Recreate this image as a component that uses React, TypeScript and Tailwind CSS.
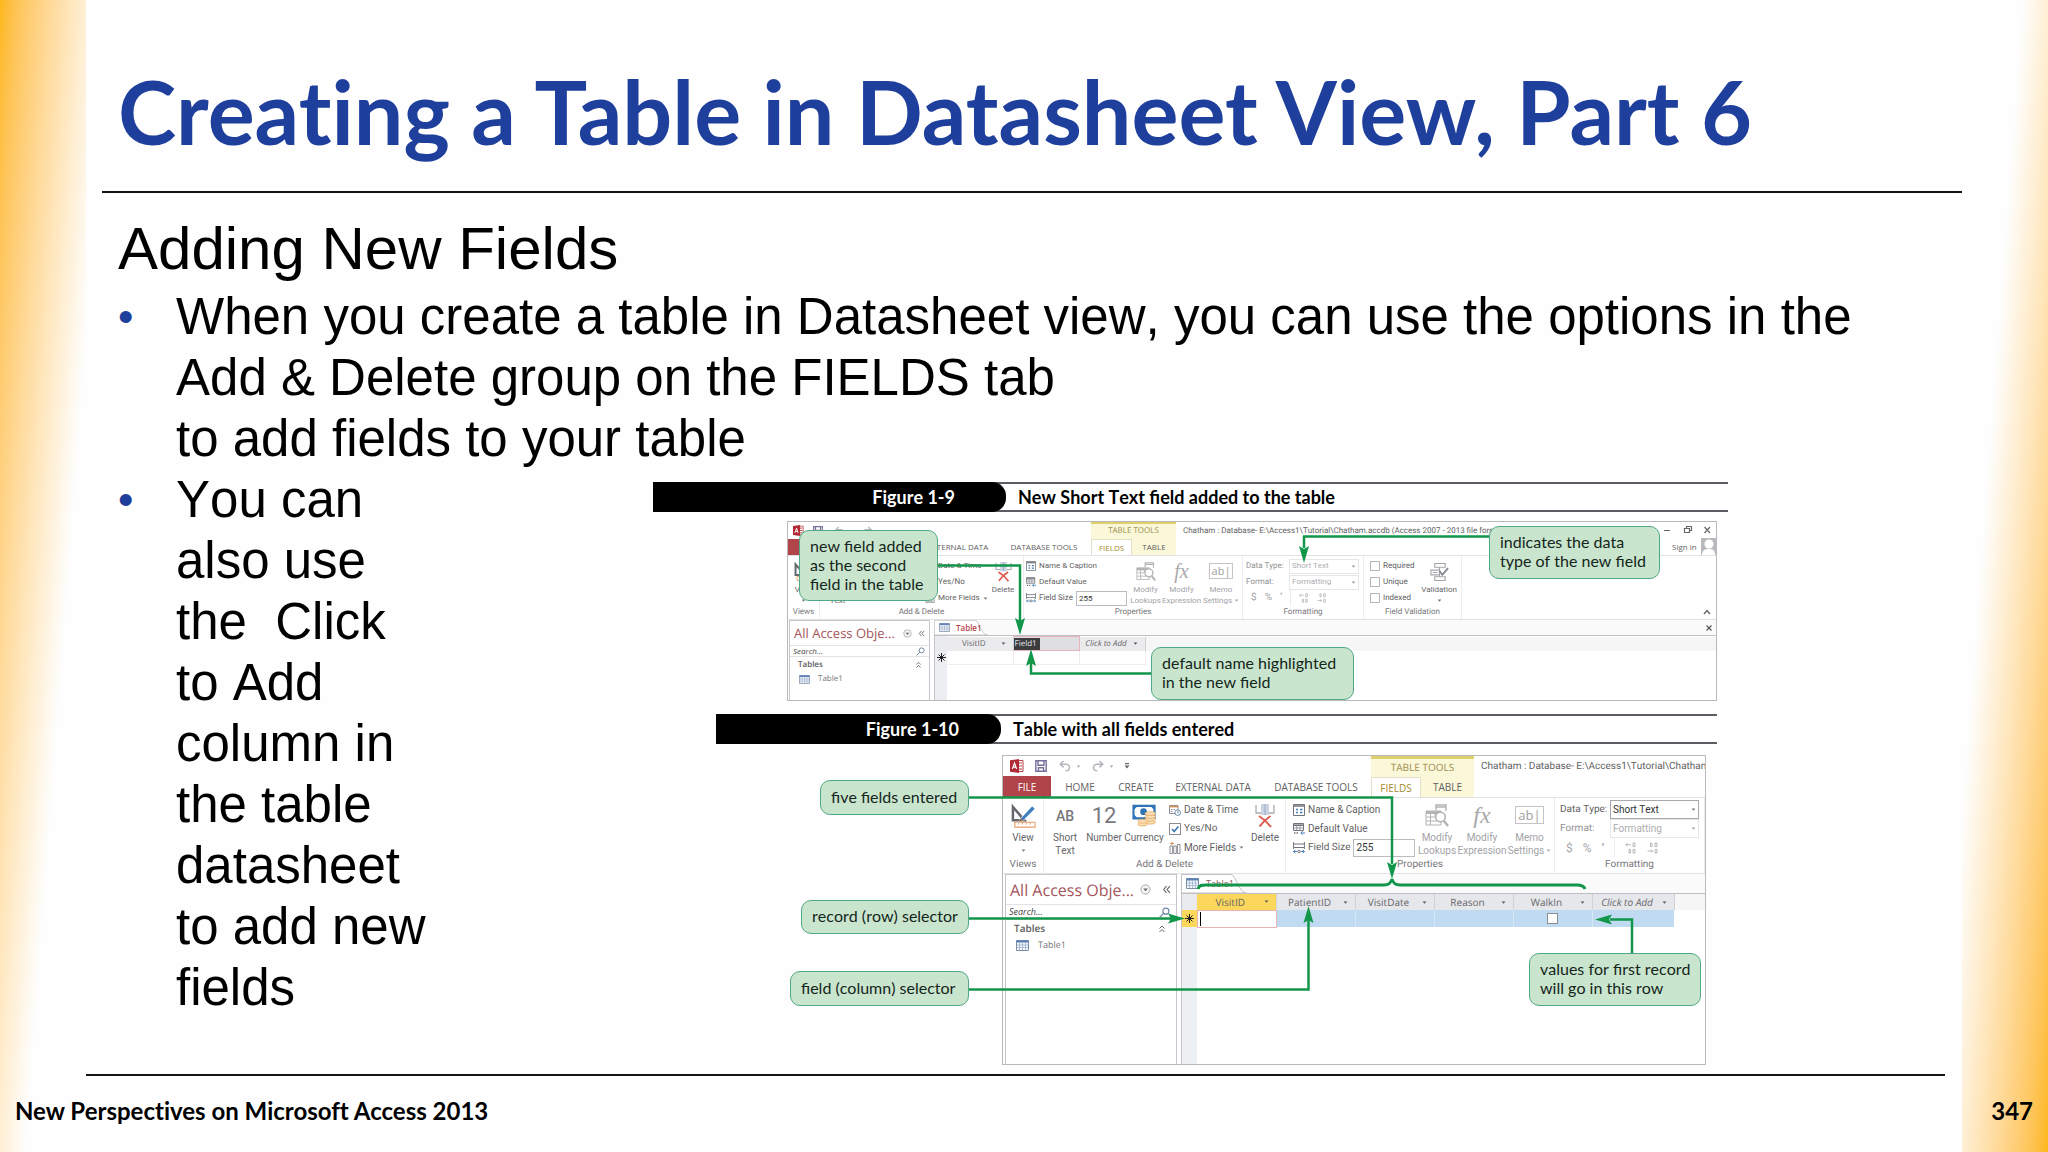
import React from "react";

type Size = "lg" | "sm";

/* ---------- icons ---------- */

const AccessLogo = ({ className }: { className: string }) => (
  <svg viewBox="0 0 14 14" className={className} aria-hidden="true">
    <path d="M8 1.5h5v11H8z" fill="#fff" stroke="#b8434a" strokeWidth="1" />
    <path d="M9 4h3M9 7h3M9 10h3" stroke="#b8434a" strokeWidth="1.2" />
    <path d="M0 1.2 9 0v14L0 12.8z" fill="#b02a35" />
    <path d="M2.4 10 4.5 4l2.1 6M3.1 8.2h2.8" fill="none" stroke="#fff" strokeWidth="1.2" />
  </svg>
);

const SaveIcon = ({ className }: { className: string }) => (
  <svg viewBox="0 0 12 12" className={className} fill="none" stroke="#77709c" strokeWidth="1.4" aria-hidden="true">
    <path d="M.8.8h10.4v10.4H.8z" />
    <path d="M3 1v4.2h6V1M3.4 11V7.8h5.2V11" />
  </svg>
);

const UndoIcon = ({ className, flip = false }: { className: string; flip?: boolean }) => (
  <svg viewBox="0 0 12 12" className={className} fill="none" stroke="#b3b5bb" strokeWidth="1.5" aria-hidden="true">
    <g transform={flip ? "matrix(-1 0 0 1 12 0)" : undefined}>
      <path d="M4.6 1 1.2 4.2l3.4 3.2M1.4 4.2h5.4c5 0 5 6.4-.2 6.6" />
    </g>
  </svg>
);

const Caret = ({ color = "#777" }: { color?: string }) => (
  <svg viewBox="0 0 6 4" className="h-[3px] w-[5px] shrink-0" aria-hidden="true">
    <path d="M.5.5h5L3 3.5z" fill={color} />
  </svg>
);

const ViewIcon = ({ className }: { className: string }) => (
  <svg viewBox="0 0 26 26" className={className} aria-hidden="true">
    <path d="M2 3v14h12z" fill="none" stroke="#66686e" strokeWidth="2.6" />
    <path d="M4 19h21v5H4z" fill="#fff" stroke="#e8a06c" strokeWidth="1.2" />
    <path d="M8 19v2.4M12 19v2.4M16 19v2.4M20 19v2.4" stroke="#e8a06c" />
    <path d="M10 15 22 2l3 3-12 12-5 2z" fill="#3f7fbf" stroke="#fff" strokeWidth=".7" />
    <path d="m10 15 3 2-5 2z" fill="#9a6a42" />
  </svg>
);

const CurrencyIcon = ({ className }: { className: string }) => (
  <svg viewBox="0 0 26 24" className={className} aria-hidden="true">
    <path d="M1.5 2h22v13h-22z" fill="#fff" stroke="#2f74b5" strokeWidth="2.2" />
    <circle cx="12" cy="8" r="3.5" fill="#2f74b5" />
    <path d="M2 2h4L2 6zM23 2h-4l4 4zM2 15v-4l4 4z" fill="#2f74b5" />
    <g fill="#f8dfb8" stroke="#e9a95c" strokeWidth=".8">
      <ellipse cx="19" cy="19" rx="5.5" ry="2" />
      <ellipse cx="19" cy="16" rx="5.5" ry="2" />
      <ellipse cx="19" cy="13" rx="5.5" ry="2" />
      <ellipse cx="19" cy="10" rx="5.5" ry="2" />
      <ellipse cx="11" cy="21" rx="5" ry="2" />
      <ellipse cx="11" cy="18" rx="5" ry="2" />
    </g>
  </svg>
);

const DateIcon = ({ className }: { className: string }) => (
  <svg viewBox="0 0 12 12" className={className} fill="none" stroke="#8a8d93" aria-hidden="true">
    <path d="M.5 1.5H9v8H.5z" />
    <path d="M.5 2.6H9" stroke="#d9935a" strokeWidth="1.6" />
    <path d="M2 5.5h1.5M4.5 5.5H6M2 7.5h1.5" />
    <circle cx="8.7" cy="8.7" r="2.8" fill="#fff" stroke="#6f8fae" />
    <path d="M8.7 7v1.9h1.4" stroke="#6f8fae" strokeWidth=".8" />
  </svg>
);

const MoreIcon = ({ className }: { className: string }) => (
  <svg viewBox="0 0 12 12" className={className} fill="none" stroke="#8a8d93" aria-hidden="true">
    <path d="M1 4h2.6v7.5H1zM4.7 4h2.6v7.5H4.7zM8.4 2.5H11v9H8.4z" />
    <path d="M1 1.5h4M3 0v3" stroke="#d9935a" />
  </svg>
);

const DeleteIcon = ({ className }: { className: string }) => (
  <svg viewBox="0 0 20 24" className={className} fill="none" aria-hidden="true">
    <path d="M1 1v8h5M19 1v8h-5" stroke="#a9acb2" strokeWidth="1.3" />
    <path d="M6 0h8v11H6z" fill="#c9d3e4" />
    <path d="M10 0v11" stroke="#9eabc4" />
    <path d="M4 12c5 3 9 7 12 11M15.5 12C11 15 7 19 4.5 22.5" stroke="#dd5a4d" strokeWidth="2" />
  </svg>
);

const NameIcon = ({ className }: { className: string }) => (
  <svg viewBox="0 0 12 12" className={className} fill="none" stroke="#70757d" aria-hidden="true">
    <path d="M.5.5h11v11H.5z" />
    <path d="M.5 2h11" strokeWidth="1.5" />
    <path d="M3 5.5h2M7 5.5h2.5M3 8.5h2M7 8.5h2.5" stroke="#4a7fb8" strokeWidth="1.4" />
  </svg>
);

const DefaultIcon = ({ className }: { className: string }) => (
  <svg viewBox="0 0 12 12" className={className} fill="none" stroke="#70757d" aria-hidden="true">
    <path d="M.5.5h10v7H.5z" />
    <path d="M.5 2.2h10" strokeWidth="1.6" />
    <path d="M1 5h9M3.8 3v4M7 3v4" strokeWidth=".7" />
    <path d="M1 10h5" strokeWidth="1.5" strokeDasharray="1.5 1" />
    <path d="M12 10H8M9.6 8.2 7.8 10l1.8 1.8" stroke="#4a7fb8" />
  </svg>
);

const SizeIcon = ({ className }: { className: string }) => (
  <svg viewBox="0 0 12 12" className={className} fill="none" stroke="#70757d" aria-hidden="true">
    <path d="M.6 0v7M11.4 0v7M1 2h10M1 5.5h10" />
    <path d="M.5 9.5h4M7.5 9.5h4M2.3 7.8.6 9.5l1.7 1.7M9.7 7.8l1.7 1.7-1.7 1.7" stroke="#4a7fb8" />
    <circle cx="6" cy="9.5" r="1.2" />
  </svg>
);

const LookupIcon = ({ className }: { className: string }) => (
  <svg viewBox="0 0 24 24" className={className} fill="none" stroke="#b4b4b6" aria-hidden="true">
    <path d="M11 6V1h10v6M11 3h10" strokeWidth="1.4" />
    <path d="M1 7h15v14H1z" />
    <path d="M1 8.5h15" strokeWidth="3" />
    <path d="M1 13h9M1 17h11M5.5 9v12M10 9v4" />
    <circle cx="15.5" cy="13" r="4.8" fill="#fff" strokeWidth="1.6" />
    <path d="m19 17 4 5" strokeWidth="2.4" />
  </svg>
);

const FxIcon = ({ size }: { size: Size }) => (
  <span
    className={
      size === "lg"
        ? "font-['Liberation_Serif',serif] text-[24px] leading-[22px] italic text-[#a9a9ab]"
        : "font-['Liberation_Serif',serif] text-[20px] leading-[18px] italic text-[#a9a9ab]"
    }
  >
    fx
  </span>
);

const MemoIcon = ({ size }: { size: Size }) => (
  <span
    className={
      size === "lg"
        ? "mt-[2px] border border-[#c4c4c6] px-[2px] font-['Open_Sans',sans-serif] text-[13px] leading-[16px] text-[#a0a0a2]"
        : "mt-px border border-[#c4c4c6] px-[2px] font-['Open_Sans',sans-serif] text-[11px] leading-[14px] text-[#a0a0a2]"
    }
  >
    ab|
  </span>
);

const ValidationIcon = ({ className }: { className: string }) => (
  <svg viewBox="0 0 20 20" className={className} fill="none" stroke="#a4a6aa" strokeWidth="1.2" aria-hidden="true">
    <path d="M5 1h11v4H5zM5 15h11v4H5zM1 8h9v5H1z" />
    <path d="M10 5v3M10 13v2M3 10.5h5" />
    <path d="m10 9 3 4 6-7" stroke="#868a90" strokeWidth="2" />
  </svg>
);

const DecimalIcon = ({ className, flip = false }: { className: string; flip?: boolean }) => (
  <svg viewBox="0 0 12 12" className={className} fill="none" stroke="#b9b9bb" aria-hidden="true">
    {flip ? (
      <path d="M3.5 1H5v3.5H3.5zM8 1h2v3.5H8zM8 7.5h2V11H8zM.5 9h5M4 7.5 5.5 9 4 10.5" />
    ) : (
      <path d="M8 1h2v3.5H8zM.8 2.7h5M2.4 1.2.8 2.7l1.6 1.5M4 7.5h1.5V11H4zM8 7.5h2V11H8z" />
    )}
  </svg>
);

const GridIcon = ({ className }: { className: string }) => (
  <svg viewBox="0 0 13 11" className={className} aria-hidden="true">
    <path d="M.5.5h12v10H.5z" fill="#f4f8fd" stroke="#7d8da6" />
    <path d="M.5 1.5h12" stroke="#5b7fb5" strokeWidth="2" />
    <path d="M3.5 2v8M6.5 2v8M9.5 2v8M1 5h11M1 7.5h11" stroke="#9db1cf" strokeWidth=".8" />
  </svg>
);

const SearchIcon = ({ className }: { className: string }) => (
  <svg viewBox="0 0 12 12" className={className} fill="none" stroke="#6f87a0" strokeWidth="1.3" aria-hidden="true">
    <circle cx="7.5" cy="4.5" r="3.3" />
    <path d="M5 7 .8 11.2" />
  </svg>
);

const DropCircle = ({ className }: { className: string }) => (
  <svg viewBox="0 0 12 12" className={className} aria-hidden="true">
    <circle cx="6" cy="6" r="5" fill="#f5f5f5" stroke="#a3a3a8" />
    <path d="M3.5 5h5L6 8z" fill="#66666c" />
  </svg>
);

const Chevrons = ({ className, up = false }: { className: string; up?: boolean }) => (
  <svg viewBox="0 0 8 8" className={className} fill="none" stroke="#66666c" aria-hidden="true">
    <path d={up ? "M1.5 4 4 1.5 6.5 4M1.5 7.5 4 5l2.5 2.5" : "M4 1 1.5 4 4 7M7 1 4.5 4 7 7"} />
  </svg>
);

const Star = () => (
  <svg viewBox="0 0 9 9" className="mx-auto h-[9px] w-[9px]" stroke="#222" aria-hidden="true">
    <path d="M4.5 0v9M0 4.5h9" />
    <path d="m1.5 1.5 6 6M7.5 1.5l-6 6" />
  </svg>
);

/* ---------- ribbon building blocks ---------- */

const Group = ({
  label,
  size,
  className,
  children,
}: {
  label: string;
  size: Size;
  className: string;
  children?: React.ReactNode;
}) => (
  <section className={`flex shrink-0 flex-col border-r border-[#ededf0] ${className}`}>
    <div className="flex min-h-0 flex-1">{children}</div>
    <div
      className={
        size === "lg"
          ? "h-4 text-center text-[10px] leading-[16px] text-[#77777b]"
          : "h-[14px] text-center text-[8px] leading-[14px] text-[#77777b]"
      }
    >
      {label}
    </div>
  </section>
);

const BigButton = ({
  icon,
  lines,
  size,
  className,
  muted = false,
  caret = false,
}: {
  icon: React.ReactNode;
  lines: string[];
  size: Size;
  className: string;
  muted?: boolean;
  caret?: boolean;
}) => (
  <button
    type="button"
    className={`flex shrink-0 flex-col items-center justify-start whitespace-nowrap pt-[6px] ${
      size === "lg" ? "text-[10px] leading-[13px]" : "text-[8px] leading-[11px]"
    } ${muted ? "text-[#a3a3a6]" : "text-[#66666a]"} ${className}`}
  >
    <span className={size === "lg" ? "flex h-[27px] shrink-0 items-start" : "flex h-[22px] shrink-0 items-start"}>{icon}</span>
    {lines.map((line, i) => (
      <span key={line} className="flex items-center gap-[2px]">
        {line}
        {caret && lines.length > 1 && i === lines.length - 1 && <Caret color="#aaa" />}
      </span>
    ))}
    {caret && lines.length === 1 && (
      <span className={size === "lg" ? "flex h-[13px] items-center" : "flex h-[11px] items-center"}>
        <Caret />
      </span>
    )}
  </button>
);

const rowText = (size: Size) =>
  size === "lg"
    ? "flex h-[19px] items-center gap-[3px] whitespace-nowrap text-[10px] text-[#5f5f63]"
    : "flex h-4 items-center gap-[3px] whitespace-nowrap text-[8px] text-[#5f5f63]";

const rowIcon = (size: Size) => (size === "lg" ? "h-[12px] w-[12px] shrink-0" : "h-[10px] w-[10px] shrink-0");

const DateFields = ({ size, className }: { size: Size; className: string }) => (
  <div className={`shrink-0 pl-[3px] pt-[2px] ${className}`}>
    <button type="button" className={rowText(size)}>
      <DateIcon className={rowIcon(size)} />
      Date &amp; Time
    </button>
    <label className={rowText(size)}>
      <span className="relative flex">
        <input type="checkbox" defaultChecked className={`appearance-none border border-[#8b8d92] bg-white ${rowIcon(size)}`} />
        <svg
          viewBox="0 0 12 12"
          className={`pointer-events-none absolute inset-0 ${rowIcon(size)}`}
          fill="none"
          stroke="#3d78b4"
          strokeWidth="1.6"
          aria-hidden="true"
        >
          <path d="m3 6 2.2 2.5L9.3 3.5" />
        </svg>
      </span>
      Yes/No
    </label>
    <button type="button" className={rowText(size)}>
      <MoreIcon className={rowIcon(size)} />
      More Fields
      <Caret />
    </button>
  </div>
);

const NameFields = ({ size, className, inputClass }: { size: Size; className: string; inputClass: string }) => (
  <div className={`shrink-0 pt-[2px] ${className}`}>
    <button type="button" className={rowText(size)}>
      <NameIcon className={rowIcon(size)} />
      Name &amp; Caption
    </button>
    <button type="button" className={rowText(size)}>
      <DefaultIcon className={rowIcon(size)} />
      Default Value
    </button>
    <label className={rowText(size)}>
      <SizeIcon className={rowIcon(size)} />
      Field Size
      <input
        defaultValue="255"
        className={`ml-auto min-w-0 border border-[#bcbcc0] bg-white px-[2px] text-[#333] ${inputClass}`}
      />
    </label>
  </div>
);

const PickRow = ({ label, value, size, muted }: { label: string; value: string; size: Size; muted: boolean }) => (
  <label className={`${rowText(size)} ${muted ? "opacity-70" : ""}`}>
    <span className={size === "lg" ? "w-[47px]" : "w-[40px]"}>{label}</span>
    <span className="relative flex items-center">
      <select
        disabled={muted}
        className={`appearance-none border bg-white pl-[2px] opacity-100 ${
          size === "lg" ? "h-[19px] w-[89px] text-[10px]" : "h-[15px] w-[70px] text-[8px]"
        } ${muted ? "border-[#dcdcdf] text-[#8a8a8d]" : "border-[#a9a9ad] text-[#333]"}`}
      >
        <option>{value}</option>
      </select>
      <span className="pointer-events-none absolute right-[3px]">
        <Caret />
      </span>
    </span>
  </label>
);

const Formatting = ({ size, className, muted }: { size: Size; className: string; muted: boolean }) => (
  <Group label="Formatting" size={size} className={className}>
    <div className={size === "lg" ? "pl-[5px] pt-[2px]" : "pl-[3px] pt-[2px]"}>
      <PickRow label="Data Type:" value="Short Text" size={size} muted={muted} />
      <PickRow label="Format:" value="Formatting" size={size} muted />
      <div
        className={
          size === "lg"
            ? "flex h-[19px] items-center gap-[10px] pl-[6px] text-[12px] text-[#a6a6a9]"
            : "flex h-4 items-center gap-[8px] pl-[5px] text-[10px] text-[#a6a6a9]"
        }
      >
        <span>$</span>
        <span>%</span>
        <span className="font-bold">’</span>
        <span className="h-full border-l border-[#ededf0]" />
        <DecimalIcon className={rowIcon(size)} />
        <DecimalIcon flip className={rowIcon(size)} />
      </div>
    </div>
  </Group>
);

const PropertyTools = ({ size, widths }: { size: Size; widths: [string, string, string] }) => (
  <>
    <BigButton
      muted
      size={size}
      className={widths[0]}
      icon={<LookupIcon className={size === "lg" ? "h-[24px] w-[24px]" : "h-[20px] w-[20px]"} />}
      lines={["Modify", "Lookups"]}
    />
    <BigButton muted size={size} className={widths[1]} icon={<FxIcon size={size} />} lines={["Modify", "Expression"]} />
    <BigButton muted caret size={size} className={widths[2]} icon={<MemoIcon size={size} />} lines={["Memo", "Settings"]} />
  </>
);

/* ---------- navigation pane and tabs ---------- */

const NavPane = ({ size, className }: { size: Size; className: string }) => {
  const lg = size === "lg";
  return (
    <aside className={`shrink-0 border-x border-t border-[#c6c6ca] bg-white ${className}`}>
      <div className={lg ? "flex h-[29px] items-center pl-1 pr-[5px]" : "flex h-[24px] items-center pl-1 pr-[4px]"}>
        <h3
          className={
            lg
              ? "flex-1 whitespace-nowrap text-[16px] leading-[20px] text-[#a4555b]"
              : "flex-1 whitespace-nowrap text-[13px] leading-[18px] text-[#a4555b]"
          }
        >
          All Access Obje...
        </h3>
        <DropCircle className={lg ? "mr-[11px] h-[11px] w-[11px]" : "mr-[6px] h-[9px] w-[9px]"} />
        <Chevrons className={lg ? "h-[9px] w-[9px]" : "h-[7px] w-[7px]"} />
      </div>
      <div
        className={
          lg
            ? "flex h-[16px] items-center border-y border-[#e3e3e6] pr-[6px]"
            : "flex h-[12px] items-center border-y border-[#e3e3e6] pr-[4px]"
        }
      >
        <input
          aria-label="Search"
          placeholder="Search..."
          className={
            lg
              ? "w-0 flex-1 pl-[3px] text-[9px] leading-[12px] italic placeholder:text-[#444]"
              : "w-0 flex-1 pl-[3px] text-[8px] leading-[10px] italic placeholder:text-[#444]"
          }
        />
        <SearchIcon className={lg ? "h-[11px] w-[11px]" : "h-[9px] w-[9px]"} />
      </div>
      <div
        className={
          lg
            ? "flex h-[16px] items-center justify-between pl-2 pr-[10px] text-[10px] font-semibold text-[#5b5b60]"
            : "flex h-[15px] items-center justify-between pl-2 pr-[7px] text-[8px] font-semibold text-[#5b5b60]"
        }
      >
        Tables
        <Chevrons up className={lg ? "h-[9px] w-[8px]" : "h-[7px] w-[7px]"} />
      </div>
      <div
        className={
          lg
            ? "flex h-[18px] items-center gap-[9px] pl-[10px] text-[9px] text-[#77777b]"
            : "flex h-[14px] items-center gap-[8px] pl-[9px] text-[8px] text-[#77777b]"
        }
      >
        <GridIcon className={lg ? "h-[11px] w-[13px]" : "h-[9px] w-[11px]"} />
        Table1
      </div>
    </aside>
  );
};

const SheetTab = ({ size, className }: { size: Size; className: string }) => {
  const lg = size === "lg";
  return (
    <button
      type="button"
      className={
        lg
          ? "relative flex h-full w-[66px] items-center gap-[7px] pl-[5px] text-[9px]"
          : "relative flex h-full w-[54px] items-center gap-[6px] pl-[5px] text-[8px]"
      }
    >
      <svg viewBox="0 0 66 20" preserveAspectRatio="none" className="absolute inset-0 h-full w-full" aria-hidden="true">
        <path d="M.5 20V.5H50c5 0 7 19 15.5 19.5z" fill="#fff" stroke="#c0c0c4" />
      </svg>
      <GridIcon className={lg ? "relative h-[11px] w-[13px]" : "relative h-[9px] w-[11px]"} />
      <span className={`relative ${className}`}>Table1</span>
    </button>
  );
};

const HeadCell = ({ children, className = "" }: { children?: React.ReactNode; className?: string }) => (
  <th scope="col" className={`border-r border-[#d2d2d6] p-0 font-normal ${className}`}>
    <span className="flex items-center justify-between pr-[7px]">
      <span className="flex-1 text-center whitespace-nowrap">{children}</span>
      <Caret color="#555" />
    </span>
  </th>
);

const ToolTabs = ({ size, className }: { size: Size; className: string }) => {
  const lg = size === "lg";
  return (
    <div className={`flex shrink-0 flex-col border-[#ddd06a] bg-[#fbf7d9] ${className}`}>
      <div className={lg ? "h-[18px] text-center leading-[16px] text-[#9c8f4d]" : "h-[15px] text-center leading-[13px] text-[#9c8f4d]"}>
        TABLE TOOLS
      </div>
      <div className="flex flex-1">
        <button
          type="button"
          className={
            lg
              ? "w-[50px] border-x border-t border-[#e3e0c8] bg-white text-[#a38a2c]"
              : "w-[41px] border-x border-t border-[#e3e0c8] bg-white text-[#a38a2c]"
          }
        >
          FIELDS
        </button>
        <button type="button" className="flex-1">
          TABLE
        </button>
      </div>
    </div>
  );
};

/* ---------- figure parts ---------- */

const Caption = ({ number, title, tagClass }: { number: string; title: string; tagClass: string }) => (
  <figcaption className="flex h-[30px] border-y-2 border-[#5c5c62] bg-white font-['Lato',sans-serif] text-[18px] leading-[26px] font-bold text-black">
    <span className={`-my-[2px] flex shrink-0 items-center justify-end rounded-r-[14px] bg-black text-white ${tagClass}`}>{number}</span>
    <span className="pl-3 whitespace-nowrap">{title}</span>
  </figcaption>
);

const Callout = ({ className, children }: { className: string; children: React.ReactNode }) => (
  <div
    className={`absolute flex items-center rounded-[10px] border border-[#4fa886] bg-[#cae5ce] pb-[3px] pl-[10px] font-['Lato',sans-serif] text-[16px] leading-[19px] whitespace-pre text-[#14251b] ${className}`}
  >
    {children}
  </div>
);

const Head = ({ x, y, turn }: { x: number; y: number; turn: number }) => (
  <path d="M0 0-5-17 0-14 5-17z" fill="#12964a" transform={`translate(${x} ${y}) rotate(${turn})`} />
);

function FigureNine() {
  return (
    <figure className="relative w-[1075px]">
      <Caption number="Figure 1-9" title="New Short Text field added to the table" tagClass="w-[353px] pr-[51px]" />
      <div className="mt-[9px] mr-[11px] ml-[134px] flex h-[180px] flex-col border border-[#b9b9bc] bg-white font-['Open_Sans',sans-serif] leading-[12px] text-[#5f5f63] [text-rendering:geometricPrecision]">
        <div className="flex h-[33px] shrink-0">
          <div className="flex w-[303px] shrink-0 flex-col">
            <div className="flex h-[17px] items-center pl-[5px]">
              <AccessLogo className="mr-[9px] h-[11px] w-[11px]" />
              <SaveIcon className="mr-[12px] h-[10px] w-[10px]" />
              <UndoIcon className="mr-[17px] h-[10px] w-[10px]" />
              <UndoIcon flip className="h-[10px] w-[10px]" />
            </div>
            <nav className="flex h-[16px] items-center text-[8px] whitespace-nowrap">
              <button type="button" aria-label="File" className="mr-[86px] h-full w-[40px] bg-[#b1444b]" />
              <button type="button" className="w-[88px]">EXTERNAL DATA</button>
              <button type="button" className="w-[84px]">DATABASE TOOLS</button>
            </nav>
          </div>
          <ToolTabs size="sm" className="w-[85px] border-t-2 text-[8px]" />
          <div className="flex min-w-0 flex-1">
            <div className="min-w-0 flex-1 overflow-hidden pl-[7px] font-['Roboto',sans-serif] text-[8px] leading-[17px] whitespace-nowrap">
              Chatham : Database- E:\Access1\Tutorial\Chatham.accdb (Access 2007 - 2013 file form
            </div>
            <div className="flex w-[54px] shrink-0 flex-col">
              <svg viewBox="0 0 54 16" className="h-[16px] w-[54px]" fill="none" stroke="#66666c" aria-hidden="true">
                <path d="M2 8.5h6M22.5 6.5h5v4h-5zM24.5 6V4.5h5v4H28M42.5 5l5.5 6M48 5l-5.5 6" strokeWidth="1.2" />
              </svg>
              <button type="button" className="flex h-[17px] items-center justify-between pl-[10px] text-[8px] whitespace-nowrap">
                Sign in
                <svg viewBox="0 0 15 17" className="h-[17px] w-[15px] bg-[#b9b9bd]" aria-hidden="true">
                  <circle cx="8" cy="6" r="4.5" fill="#fff" />
                  <path d="M1 17c0-5 3-6 7-6s6 1 6 6z" fill="#fff" />
                </svg>
              </button>
            </div>
          </div>
        </div>
        <div className="flex h-[65px] shrink-0 border-y border-[#e2e2e5] font-['Roboto',sans-serif]">
          <Group label="Views" size="sm" className="w-[32px]">
            <BigButton size="sm" className="w-full" icon={<ViewIcon className="h-[20px] w-[20px]" />} lines={["View"]} caret />
          </Group>
          <Group label={"Add & Delete"} size="sm" className="w-[204px]">
            <BigButton size="sm" className="mr-[67px] w-[35px]" icon={null} lines={["Short", "Text"]} />
            <DateFields size="sm" className="w-[67px]" />
            <BigButton size="sm" className="w-[28px]" icon={<DeleteIcon className="h-[20px] w-[17px]" />} lines={["Delete"]} />
          </Group>
          <Group label="Properties" size="sm" className="w-[219px]">
            <NameFields size="sm" className="w-[105px] pr-[2px] pl-[2px]" inputClass="h-[15px] w-[52px]" />
            <PropertyTools size="sm" widths={["w-[33px]", "w-[39px]", "w-[40px]"]} />
          </Group>
          <Formatting size="sm" className="w-[121px]" muted />
          <Group label="Field Validation" size="sm" className="w-[98px]">
            <div className="w-[53px] pt-[2px] pl-[6px]">
              {["Required", "Unique", "Indexed"].map((name) => (
                <label key={name} className={rowText("sm")}>
                  <input type="checkbox" className="h-[10px] w-[10px] appearance-none border border-[#b7b7bb] bg-white" />
                  {name}
                </label>
              ))}
            </div>
            <BigButton size="sm" className="w-[44px]" icon={<ValidationIcon className="h-[20px] w-[19px]" />} lines={["Validation"]} caret />
          </Group>
          <div className="flex flex-1 items-end justify-end pr-[5px] pb-1">
            <svg viewBox="0 0 8 6" className="h-[6px] w-[8px]" fill="none" stroke="#66666c" strokeWidth="1.4" aria-hidden="true">
              <path d="M1 5 4 1.5 7 5" />
            </svg>
          </div>
        </div>
        <div className="flex min-h-0 flex-1 gap-1">
          <NavPane size="sm" className="ml-px w-[141px]" />
          <div className="flex min-w-0 flex-1 flex-col">
            <div className="flex h-[16px] shrink-0 items-center justify-between border-b border-[#c0c0c4] bg-[#fafafb] pr-1">
              <SheetTab size="sm" className="font-semibold text-[#b5464d]" />
              <svg viewBox="0 0 6 6" className="h-[6px] w-[6px]" stroke="#55555b" strokeWidth="1.2" aria-hidden="true">
                <path d="m.5.5 5 5M5.5.5l-5 5" />
              </svg>
            </div>
            <div className="flex-1 border-l border-[#c6c6ca] bg-linear-to-r from-[#eceef1] from-[12px] to-white to-[12px]">
              <table className="w-full table-fixed border-collapse text-[8px] leading-[12px] text-[#66666a]">
                <thead>
                  <tr className="h-[14px] bg-[#f6f6f7]">
                    <th scope="col" className="w-[12px] bg-[#e9ebee] p-0" aria-label="Record" />
                    <HeadCell className="w-[66px] bg-[#ebebee]">VisitID</HeadCell>
                    <th scope="col" className="w-[66px] border border-[#e7b5b9] bg-[#dfdfe3] p-0 text-left font-normal">
                      <span className="block w-[26px] bg-[#3d3d40] pl-px text-[#e8e8ea]">Field1</span>
                    </th>
                    <HeadCell className="w-[66px] bg-[#ebebee] italic">Click to Add</HeadCell>
                    <th scope="col" className="p-0" aria-label="Empty" />
                  </tr>
                </thead>
                <tbody>
                  <tr className="h-[14px]">
                    <td className="p-0">
                      <Star />
                    </td>
                    <td className="border-r border-b border-[#ededf0] p-0" />
                    <td className="border-r border-b border-[#ededf0] p-0" />
                    <td className="border-r border-b border-[#ededf0] p-0" />
                    <td className="p-0" />
                  </tr>
                </tbody>
              </table>
            </div>
          </div>
        </div>
      </div>
      <svg viewBox="0 0 1076 219" className="pointer-events-none absolute top-0 left-0 h-[219px] w-[1076px]" fill="none" aria-hidden="true">
        <path d="M284 83.5H367V140M837 54.5H651V66M499 191.5H378V180" stroke="#12964a" strokeWidth="2.5" />
        <Head x={367} y={153} turn={0} />
        <Head x={651} y={81} turn={0} />
        <Head x={378} y={167} turn={180} />
      </svg>
      <Callout className="top-[48px] left-[146px] h-[71px] w-[139px]">{"new field added\nas the second\nfield in the table"}</Callout>
      <Callout className="top-[44px] left-[836px] h-[53px] w-[171px]">{"indicates the data\ntype of the new field"}</Callout>
      <Callout className="top-[165px] left-[498px] h-[53px] w-[203px]">{"default name highlighted\nin the new field"}</Callout>
    </figure>
  );
}

function FigureTen() {
  return (
    <figure className="relative ml-[63px] w-[1001px]">
      <Caption number="Figure 1-10" title="Table with all fields entered" tagClass="w-[285px] pr-[42px]" />
      <div className="mt-[11px] mr-[11px] ml-[286px] flex h-[310px] flex-col border border-[#b9b9bc] bg-white font-['Open_Sans',sans-serif] leading-[14px] text-[#5f5f63] [text-rendering:geometricPrecision]">
        <div className="flex h-[41px] shrink-0">
          <div className="flex w-[368px] shrink-0 flex-col">
            <div className="flex h-[20px] items-center pl-[7px]">
              <AccessLogo className="mr-[11px] h-[14px] w-[14px]" />
              <SaveIcon className="mr-[12px] h-[12px] w-[12px]" />
              <UndoIcon className="mr-[5px] h-[12px] w-[12px]" />
              <Caret color="#aaa" />
              <UndoIcon flip className="mr-[5px] ml-[11px] h-[12px] w-[12px]" />
              <Caret color="#aaa" />
              <svg viewBox="0 0 6 6" className="ml-[10px] h-[6px] w-[6px]" aria-hidden="true">
                <path d="M1 0h4v1.2H1zM.5 2.5h5L3 5.5z" fill="#66666c" />
              </svg>
            </div>
            <nav className="flex h-[21px] items-center text-[10px] whitespace-nowrap">
              <button type="button" className="h-full w-[48px] bg-[#b1444b] text-white">FILE</button>
              <button type="button" className="w-[58px]">HOME</button>
              <button type="button" className="w-[54px]">CREATE</button>
              <button type="button" className="w-[100px]">EXTERNAL DATA</button>
              <button type="button" className="w-[106px]">DATABASE TOOLS</button>
            </nav>
          </div>
          <ToolTabs size="lg" className="w-[103px] border-t-[3px] text-[10px]" />
          <div className="min-w-0 flex-1 overflow-hidden pl-[7px] font-['Roboto',sans-serif] text-[10px] leading-[21px] whitespace-nowrap">
            Chatham : Database- E:\Access1\Tutorial\Chatham
          </div>
        </div>
        <div className="flex h-[77px] shrink-0 border-y border-[#e2e2e5] font-['Roboto',sans-serif]">
          <Group label="Views" size="lg" className="w-[41px]">
            <BigButton size="lg" className="w-full" icon={<ViewIcon className="h-[25px] w-[25px]" />} lines={["View"]} caret />
          </Group>
          <Group label={"Add & Delete"} size="lg" className="w-[242px]">
            <BigButton
              size="lg"
              className="w-[42px]"
              icon={<span className="text-[14px] leading-[24px] font-medium text-[#77777b]">AB</span>}
              lines={["Short", "Text"]}
            />
            <BigButton size="lg" className="w-[36px]" icon={<span className="text-[22px] leading-[24px] text-[#77777b]">12</span>} lines={["Number"]} />
            <BigButton size="lg" className="w-[44px]" icon={<CurrencyIcon className="h-[23px] w-[25px]" />} lines={["Currency"]} />
            <DateFields size="lg" className="w-[80px]" />
            <BigButton size="lg" className="w-[38px]" icon={<DeleteIcon className="h-[24px] w-[20px]" />} lines={["Delete"]} />
          </Group>
          <Group label="Properties" size="lg" className="w-[269px]">
            <NameFields size="lg" className="w-[129px] pl-[7px]" inputClass="h-[18px] w-[63px]" />
            <PropertyTools size="lg" widths={["w-[44px]", "w-[46px]", "w-[49px]"]} />
          </Group>
          <Formatting size="lg" className="flex-1" muted={false} />
        </div>
        <div className="flex min-h-0 flex-1 gap-1">
          <NavPane size="lg" className="ml-[2px] w-[172px]" />
          <div className="flex min-w-0 flex-1 flex-col">
            <div className="flex h-[20px] shrink-0 items-center border-b border-[#c0c0c4] bg-[#fafafb]">
              <SheetTab size="lg" className="text-[#8e5a5e]" />
            </div>
            <div className="flex-1 border-l border-[#c6c6ca] bg-linear-to-r from-[#eef1f4] from-[15px] to-white to-[15px]">
              <table className="w-full table-fixed border-collapse text-[10px] leading-[14px] text-[#66666a]">
                <thead>
                  <tr className="h-[16px] bg-[#f6f6f7]">
                    <th scope="col" className="w-[15px] bg-[#e9ebee] p-0" aria-label="Record" />
                    <HeadCell className="w-[79px] bg-[#fbd75c]">VisitID</HeadCell>
                    <HeadCell className="w-[79px] bg-[#e6e7ea]">PatientID</HeadCell>
                    <HeadCell className="w-[79px] bg-[#e6e7ea]">VisitDate</HeadCell>
                    <HeadCell className="w-[79px] bg-[#e6e7ea]">Reason</HeadCell>
                    <HeadCell className="w-[79px] bg-[#e6e7ea]">WalkIn</HeadCell>
                    <HeadCell className="w-[82px] bg-[#e6e7ea] italic">Click to Add</HeadCell>
                    <th scope="col" className="p-0" aria-label="Empty" />
                  </tr>
                </thead>
                <tbody>
                  <tr className="h-[17px]">
                    <td className="bg-[#fbd75c] p-0">
                      <Star />
                    </td>
                    <td className="border border-[#e9b3b6] bg-white p-0">
                      <span className="ml-[2px] block h-[14px] border-l border-black" />
                    </td>
                    <td className="border-r border-[#d5e6f5] bg-[#c0daf1] p-0" />
                    <td className="border-r border-[#d5e6f5] bg-[#c0daf1] p-0" />
                    <td className="border-r border-[#d5e6f5] bg-[#c0daf1] p-0" />
                    <td className="border-r border-[#d5e6f5] bg-[#c0daf1] p-0">
                      <input
                        type="checkbox"
                        aria-label="WalkIn"
                        className="mx-auto block h-[11px] w-[11px] appearance-none border border-[#8b8d92] bg-white"
                      />
                    </td>
                    <td className="bg-[#c0daf1] p-0" />
                    <td className="p-0" />
                  </tr>
                </tbody>
              </table>
            </div>
          </div>
        </div>
      </div>
      <svg viewBox="0 0 1001 351" className="pointer-events-none absolute inset-0 h-[351px] w-[1001px]" fill="none" aria-hidden="true">
        <path
          d="M252 83.5H676V150M252 204.5H456M252 275.5H592.5V206M916 240V205.5H894"
          stroke="#12964a"
          strokeWidth="2.5"
        />
        <path d="M482 175c1-4 4-4 8-4H668c5 0 7-2 8-6 1 4 3 6 8 6H861c4 0 7 1 8 4" stroke="#12964a" strokeWidth="3" />
        <Head x={676} y={165} turn={0} />
        <Head x={469} y={204.5} turn={-90} />
        <Head x={592.5} y={192} turn={180} />
        <Head x={879} y={205.5} turn={90} />
      </svg>
      <Callout className="top-[66px] left-[104px] h-[35px] w-[149px]">five fields entered</Callout>
      <Callout className="top-[186px] left-[85px] h-[34px] w-[168px]">record (row) selector</Callout>
      <Callout className="top-[257px] left-[74px] h-[35px] w-[179px]">field (column) selector</Callout>
      <Callout className="top-[239px] left-[813px] h-[53px] w-[172px]">{"values for first record\nwill go in this row"}</Callout>
    </figure>
  );
}

/* ---------- slide ---------- */

export default function App() {
  return (
    <div className="relative flex min-h-screen w-full flex-col bg-[#fefefe] text-black">
      <div className="absolute inset-y-0 left-0 w-[86px] bg-linear-to-br from-[#fdb813] to-[#fefefe] to-65%" />
      <div className="absolute inset-y-0 right-0 w-[86px] bg-linear-to-tl from-[#fdb813] to-[#fefefe] to-65%" />
      <header className="relative mr-[86px] ml-[102px] border-b-2 border-[#141414] pt-[58px] pb-[27px] pl-4">
        <h1 className="font-['Lato',sans-serif] text-[88px] leading-[106px] font-bold whitespace-nowrap text-[#1f3f9c] [font-variant-ligatures:none]">
          Creating a Table in Datasheet View, Part 6
        </h1>
      </header>
      <main className="relative mr-[103px] ml-[118px] flex-1 pt-[19px] font-['Liberation_Sans',sans-serif] [font-kerning:none]">
        <h2 className="text-[60px] leading-[74px]">Adding New Fields</h2>
        <ul className="text-[51px] leading-[61px]">
          <li className="flex">
            <span className="w-[58px] shrink-0 text-[44px] text-[#1f3f9c]" aria-hidden="true">•</span>
            <p>
              When you create a table in Datasheet view, you can use the options in the Add &amp; Delete group on the FIELDS tab
              <br />
              to add fields to your table
            </p>
          </li>
          <li className="flex items-start">
            <span className="w-[58px] shrink-0 text-[44px] text-[#1f3f9c]" aria-hidden="true">•</span>
            <p className="w-[260px] shrink-0 whitespace-pre-wrap">You can also use the  Click to Add column in the table datasheet to add new fields</p>
            <div className="mt-[13px] ml-[217px] flex shrink-0 flex-col gap-[13px]">
              <FigureNine />
              <FigureTen />
            </div>
          </li>
        </ul>
      </main>
      <div className="relative mr-[103px] ml-[86px] border-b-2 border-[#141414]" />
      <footer className="relative flex h-[76px] items-center justify-between px-[15px] pb-[7px] font-['Lato',sans-serif] text-[24px] font-bold [font-variant-ligatures:none]">
        <span>New Perspectives on Microsoft Access 2013</span>
        <span>347</span>
      </footer>
    </div>
  );
}
